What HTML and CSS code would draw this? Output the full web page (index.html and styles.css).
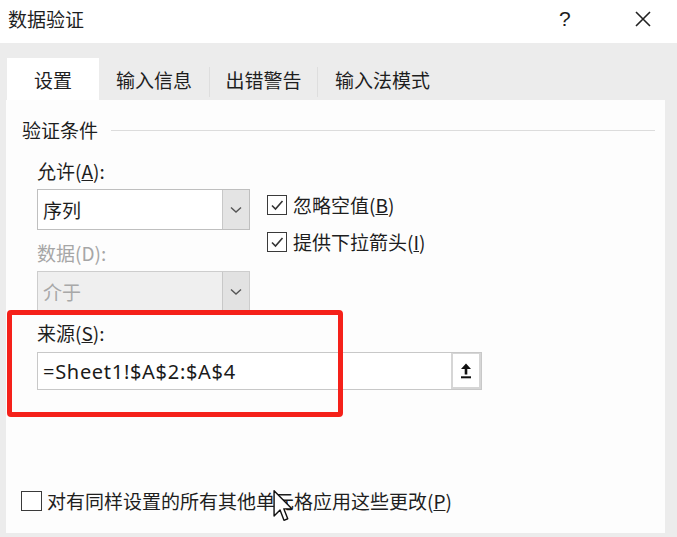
FILE: index.html
```html
<!DOCTYPE html>
<html lang="zh-CN">
<head>
<meta charset="utf-8">
<title>数据验证</title>
<link rel="stylesheet" href="styles.css">
</head>
<body>
<div class="dialog">
  <div class="titlebar">
    <span class="title">数据验证</span>
    <span class="help">?</span>
    <span class="close">
      <svg width="16" height="16" viewBox="0 0 16 16"><path d="M1 1 L15 15 M15 1 L1 15" stroke="#222" stroke-width="1.6" fill="none"/></svg>
    </span>
  </div>
  <div class="tabs">
    <div class="tab active t1">设置</div>
    <div class="tab t2">输入信息</div>
    <div class="sep"></div>
    <div class="tab t3">出错警告</div>
    <div class="sep"></div>
    <div class="tab t4">输入法模式</div>
  </div>
  <div class="panel">
    <div class="group-head"><span>验证条件</span><span class="rule"></span></div>
    <div class="criteria">
      <div class="left">
        <div class="label">允许(<u>A</u>):</div>
        <div class="select">
          <span class="value">序列</span>
          <span class="drop"><svg width="12" height="8" viewBox="0 0 12 8"><path d="M1 1.5 L6 6 L11 1.5" stroke="#555" stroke-width="1.4" fill="none"/></svg></span>
        </div>
        <div class="label disabled">数据(D):</div>
        <div class="select off">
          <span class="value">介于</span>
          <span class="drop"><svg width="12" height="8" viewBox="0 0 12 8"><path d="M1 1.5 L6 6 L11 1.5" stroke="#555" stroke-width="1.4" fill="none"/></svg></span>
        </div>
      </div>
      <div class="right">
        <div class="check">
          <span class="box"><svg width="16" height="16" viewBox="0 0 16 16"><path d="M3 8.5 L6.5 12 L13.5 4" stroke="#333" stroke-width="1.6" fill="none"/></svg></span>
          <span>忽略空值(<u>B</u>)</span>
        </div>
        <div class="check">
          <span class="box"><svg width="16" height="16" viewBox="0 0 16 16"><path d="M3 8.5 L6.5 12 L13.5 4" stroke="#333" stroke-width="1.6" fill="none"/></svg></span>
          <span>提供下拉箭头(<u>I</u>)</span>
        </div>
      </div>
    </div>
    <div class="label src">来源(<u>S</u>):</div>
    <div class="input">
      <span class="formula">=Sheet1!$A$2:$A$4</span>
      <span class="pick"><svg width="12" height="16" viewBox="0 0 12 16"><path d="M6 0.5 L11 6 L7.3 6 L7.3 11.5 L4.7 11.5 L4.7 6 L1 6 Z" fill="#111"/><rect x="1" y="13.3" width="10" height="2" fill="#111"/></svg></span>
    </div>
    <div class="bottom check">
      <span class="box"></span>
      <span>对有同样设置的所有其他单元格应用这些更改(<u>P</u>)</span>
    </div>
    <div class="highlight"></div>
    <svg class="cursor" width="21" height="33" viewBox="0 0 13 21"><path d="M0.5 0.5 L0.5 16.5 L4.3 12.8 L6.8 19.3 L9.2 18.3 L6.7 12 L11.8 12 Z" fill="#fff" stroke="#111" stroke-width="0.9" stroke-linejoin="round"/></svg>
  </div>
</div>
</body>
</html>
```
FILE: styles.css
```css
html, body {
  margin: 0;
  padding: 0;
}
body {
  width: 677px;
  height: 537px;
  overflow: hidden;
  background: #ececec;
  font-family: "Noto Sans CJK SC", "Microsoft YaHei", sans-serif;
  font-size: 19px;
  color: #1e1e1e;
}
.dialog {
  width: 677px;
  height: 537px;
  display: flex;
  flex-direction: column;
}
.titlebar {
  height: 43px;
  background: #ffffff;
  display: flex;
  align-items: center;
  padding-left: 8px;
  box-sizing: border-box;
}
.title {
  line-height: 24px;
  margin-top: -5px;
}
.help {
  margin-left: auto;
  font-family: "Liberation Sans", sans-serif;
  font-size: 21px;
  margin-top: -5px;
  width: 14px;
}
.close {
  display: flex;
  margin-left: 62px;
  margin-right: 26px;
  margin-top: -5px;
}
.tabs {
  height: 57px;
  display: flex;
  align-items: flex-end;
  padding-left: 7px;
}
.tab {
  height: 42px;
  display: flex;
  align-items: center;
  justify-content: center;
  line-height: 20px;
  padding-top: 2px;
  box-sizing: border-box;
}
.tab.active {
  background: #ffffff;
}
.t1 { width: 92px; }
.t2 { width: 110px; }
.t3 { width: 107px; }
.t4 { width: 129px; }
.sep {
  width: 1px;
  height: 30px;
  background: #dedede;
  align-self: center;
  margin-top: 20px;
}
.panel {
  position: relative;
  margin-left: 6px;
  width: 659px;
  height: 433px;
  background: #fdfdfd;
  display: flex;
  flex-direction: column;
  padding: 20px 0 22px 31px;
  box-sizing: border-box;
}
.group-head {
  display: flex;
  align-items: center;
  margin-left: -15px;
  line-height: 20px;
  height: 20px;
}
.rule {
  flex: 1;
  height: 1px;
  background: #dcdcdc;
  margin-left: 13px;
  margin-right: 10px;
}
.criteria {
  display: flex;
  margin-top: 21px;
}
.left {
  width: 213px;
  display: flex;
  flex-direction: column;
}
.label {
  line-height: 20px;
  height: 20px;
}
.label.disabled {
  color: #a6a6a6;
  margin-top: 13px;
}
.select {
  margin-top: 8px;
  height: 41px;
  border: 1px solid #bfbfbf;
  background: #ffffff;
  display: flex;
  box-sizing: border-box;
}
.select .value {
  flex: 1;
  display: flex;
  align-items: center;
  padding-left: 5px;
}
.select.off {
  background: #efefef;
  color: #a8a8a8;
  border-color: #cdcdcd;
}
.drop {
  width: 26px;
  background: #e4e4e4;
  border-left: 1px solid #c8c8c8;
  display: flex;
  align-items: center;
  justify-content: center;
}
.select.off .drop {
  background: #e2e2e2;
}
.right {
  margin-left: 17px;
  padding-top: 34px;
  display: flex;
  flex-direction: column;
  gap: 17px;
}
.check {
  display: flex;
  align-items: center;
  height: 20px;
  line-height: 20px;
}
.box {
  width: 20px;
  height: 20px;
  border: 1.5px solid #3a3a3a;
  box-sizing: border-box;
  display: flex;
  align-items: center;
  justify-content: center;
  margin-right: 6px;
  background: #fff;
}
.label.src {
  margin-top: 11px;
}
.input {
  margin-top: 9px;
  width: 445px;
  height: 38px;
  border: 1px solid #c8c8c8;
  background: #ffffff;
  display: flex;
  box-sizing: border-box;
}
.formula {
  flex: 1;
  display: flex;
  align-items: center;
  padding-left: 5px;
  font-family: "Noto Sans", sans-serif;
  font-size: 20px;
  letter-spacing: 0.7px;
  color: #1a1a1a;
}
.pick {
  width: 30px;
  border: 2px solid #d6d6d6;
  border-top-width: 1px;
  box-sizing: border-box;
  display: flex;
  align-items: center;
  justify-content: center;
  background: #fff;
}
.bottom {
  margin-top: auto;
  margin-left: -16px;
}
.bottom .box {
  width: 21px;
  margin-right: 5px;
}
.highlight {
  position: absolute;
  left: 1px;
  top: 210px;
  width: 336px;
  height: 107px;
  border: 5px solid #f5211a;
  border-radius: 4px;
  box-sizing: border-box;
}
.cursor {
  position: absolute;
  left: 267px;
  top: 390px;
}
```
